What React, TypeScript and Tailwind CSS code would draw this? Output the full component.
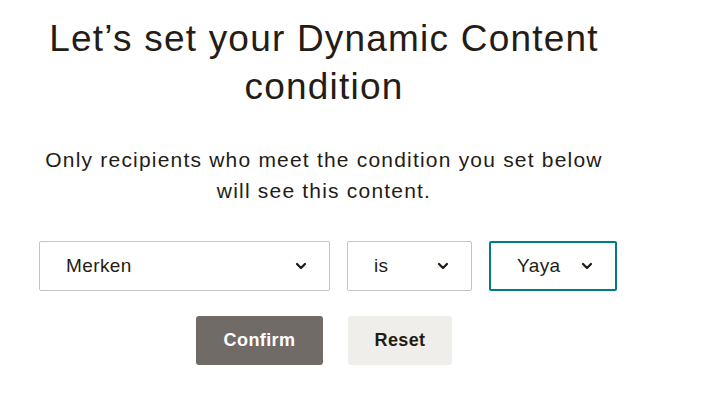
import { ChevronDown } from "lucide-react";

function Select({ label, width, active }: { label: string; width: string; active?: boolean }) {
  return (
    <div
      className={`flex h-[50px] items-center justify-between rounded-[2px] bg-white pl-[26px] pr-[20px] text-[19px] tracking-[0.4px] text-[#241c15] ${width} ${
        active ? "border-2 border-[#007c89]" : "border border-[#c4c4c4]"
      }`}
    >
      <span>{label}</span>
      <ChevronDown size={16} strokeWidth={3.5} />
    </div>
  );
}

export default function App() {
  return (
    <main
      className="min-h-screen bg-white"
      style={{ fontFamily: "'Liberation Sans', Arial, sans-serif" }}
    >
      <div className="flex w-[648px] flex-col items-center pt-[15px]">
        <h1 className="w-[620px] text-center text-[37px] leading-[48px] tracking-[1.2px] text-[#241c15]">
          Let’s set your Dynamic Content condition
        </h1>
        <p className="mt-[33px] w-[580px] text-center text-[21px] leading-[31px] tracking-[1.2px] text-[#241c15]">
          Only recipients who meet the condition you set below will see this content.
        </p>
        <div className="mt-[35px] flex gap-[17px] pl-[8px]">
          <Select label="Merken" width="w-[291px]" />
          <Select label="is" width="w-[125px]" />
          <Select label="Yaya" width="w-[128px]" active />
        </div>
        <div className="mt-[25px] flex gap-[25px]">
          <button className="h-[49px] w-[127px] rounded-[3px] bg-[#716b67] text-[18px] font-bold tracking-[0.4px] text-white">
            Confirm
          </button>
          <button className="h-[49px] w-[104px] rounded-[3px] bg-[#efeeea] text-[18px] font-bold tracking-[0.4px] text-[#241c15]">
            Reset
          </button>
        </div>
      </div>
    </main>
  );
}
